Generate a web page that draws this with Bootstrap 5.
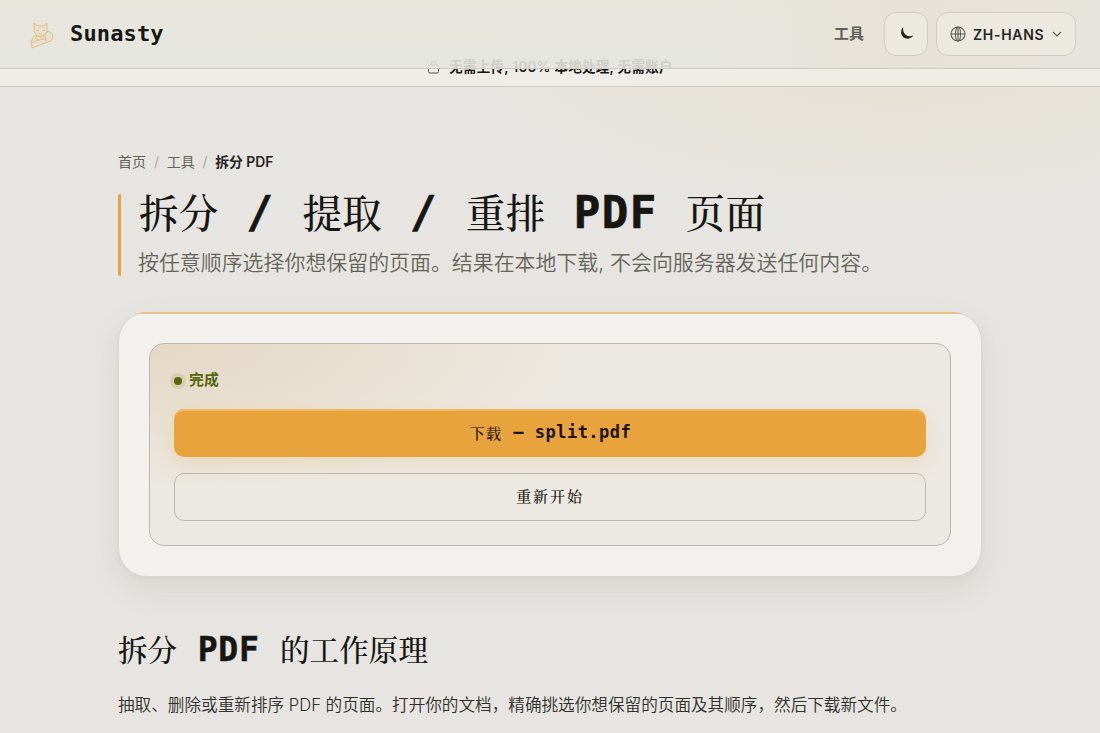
<!DOCTYPE html>
<html lang="zh-Hans">
<head>
<meta charset="utf-8">
<meta name="viewport" content="width=device-width, initial-scale=1">
<title>拆分 PDF – Sunasty</title>
<link href="https://cdn.jsdelivr.net/npm/bootstrap@5.3.0/dist/css/bootstrap.min.css" rel="stylesheet">
<style>
:root{--ink:#171711;--muted:#656459;--amber:#e8a33d}
html,body{height:100%;overflow:hidden}
body{font-family:Inter,"Noto Sans CJK SC",sans-serif;color:var(--ink);
 background:radial-gradient(ellipse 440px 150px at 900px 55px,#e7e1d2 0,#e7e1d200 100%),#e6e5e1}
.topbar{height:69px;padding:0 24px 0 26px;border-bottom:1px solid #cbcac5;background:linear-gradient(90deg,#e7e6df00 65%,#e7e2d8 82%,#e7e3dcaa),linear-gradient(#e7e6dd,#e6e6e1)}
.mono{font-family:"DejaVu Sans Mono","Noto Serif CJK SC","Noto Sans CJK SC",monospace;font-weight:700}
.cjk{font-family:"Noto Serif CJK SC","Noto Serif SC","AR PL UMing CN","Noto Sans CJK SC",serif;font-weight:500;-webkit-text-stroke:0}
.logo-word{font-size:22px;letter-spacing:.15px;line-height:30px;margin-left:-2px}
.ctl{height:44px;border:1px solid #d0cdc4;border-radius:12px;background:#ece9e1;color:#25241f}
.strip{height:18px;border-bottom:1px solid #cbcac5;background:#eeede8;overflow:hidden;line-height:18px}
.strip-line{margin-top:-11px}
.notice{font-size:13.5px;font-weight:600;letter-spacing:.3px;white-space:nowrap}
.ghost{color:#cfcec8;line-height:18px;left:0;right:0;top:57px;height:12px;overflow:hidden}
.page{width:864px;padding-top:64px}
.crumbs{font-size:14.1px;line-height:21px;color:var(--muted)}
.crumbs i{font-style:normal;color:#aaa9a1;margin:0 7.7px}
.here{color:#25241f;font-size:13.8px;letter-spacing:-.02px}
.hero{display:flow-root;border-left:3px solid var(--amber);border-radius:2px;margin-top:21px;height:82px;padding-left:17px}
h1{font-size:44px;line-height:40px;letter-spacing:1.5px;white-space:pre;margin:-3px 0 0 1px;-webkit-text-stroke:.7px var(--ink)}
h1 .cjk{font-size:39.6px;letter-spacing:.2px}
.intro{font-size:20.93px;line-height:30px;color:var(--muted);font-weight:350;margin-top:15px;white-space:nowrap}
.tool{margin-top:36px;height:265px;border:1px solid #d8d7d1;border-radius:29px;background:#f2f1ed;padding:30px;box-shadow:0 12px 30px #68684c1e,0 2px 5px #68684c0a;position:relative}
.tool::before{content:"";position:absolute;inset:-1px;border-radius:29px;background:linear-gradient(#e6c287,#e6c287) top/100% 2px no-repeat;pointer-events:none}
.result{height:203px;border:1px solid #b9b7b0;border-radius:15px;padding:24px;background:radial-gradient(ellipse 430px 145px at 0 0,#e5d8c6 0,#e8dfcf 45%,#ece9e200 100%),#ece9e2}
.done{color:#58680f;font-size:14.9px;line-height:24px;font-weight:700}
.dot{width:8px;height:8px;background:#58680f;box-shadow:0 0 0 4px #d9cdb0;margin:1px 7px 0 0}
.act{height:48px;border-radius:10px;display:flex;align-items:center;justify-content:center;white-space:pre}
.go{background:var(--amber);margin-top:17px;font-size:17px;letter-spacing:.5px;padding-left:1px;color:#1b1408;box-shadow:0 8px 18px #e8a33d30,inset 0 2px 0 #efb964}
.go .cjk{font-size:15px;letter-spacing:1.4px}
.again{border:1px solid #b9b7b0;margin-top:16px;font-size:15px;letter-spacing:1.9px;padding-bottom:2px}
h2{font-size:33px;line-height:42px;margin-top:50px;letter-spacing:.7px;white-space:pre;-webkit-text-stroke:.5px var(--ink)}
h2 .cjk{font-size:29.6px;letter-spacing:0}
.copy{font-size:16.62px;line-height:28px;margin-top:20px;font-weight:350;color:#30302b;white-space:nowrap}
</style>
</head>
<body>
<header class="topbar d-flex align-items-center position-relative">
 <svg width="30" height="32" viewBox="0 0 30 32" fill="#e8d9bd55" stroke="#e8bd7c" stroke-width="1" stroke-linejoin="round">
  <path d="M8 13V5l4 3h5l4-3v9l-3 5h-7z"/><path d="M8 18l-3 6 1 6 13-5 6-2 2-4-1-4-4-2-4 4-3 1z"/><path fill="none" d="M10 12l3 1m6-1-3 1m-3 2 1.500 1 1.500-1M6 25l6-3 8-1M9 20l4 3m6-5 1 5"/>
 </svg>
 <span class="mono logo-word flex-grow-1 ps-3">Sunasty</span>
 <a class="text-decoration-none fw-bold me-3" style="font-size:15px;color:#605f55;padding-right:4px">工具</a>
 <button class="ctl p-0 me-2 d-flex align-items-center justify-content-center" style="width:44px" aria-label="主题"><svg width="16" height="16" viewBox="0 0 16 16" style="margin:-3px 0 0 2px"><path d="M4.400 2.100C3 7.400 6.800 13 14.300 10.600 10.300 16.400 2 13.400 2.100 7.100c.1-2.200 1-3.900 2.300-5Z" fill="#25241f"/></svg></button>
 <button class="ctl d-flex align-items-center p-0" style="width:140px;padding-left:13px!important"><svg width="16" height="16" viewBox="0 0 16 16" fill="none" stroke="#5a5950" stroke-width="1.100"><circle cx="8" cy="8" r="7"/><ellipse cx="8" cy="8" rx="2.500" ry="7"/><path d="M1 8h14M8 1v14"/></svg><span class="fw-semibold" style="font-size:14px;letter-spacing:.7px;margin-left:7px">ZH-HANS</span><svg width="10" height="8" viewBox="0 0 10 8" fill="none" stroke="#5a5950" stroke-width="1.100" style="margin-left:8px"><path d="m1 2 4 4 4-4"/></svg></button>
 <div class="ghost notice position-absolute text-center" aria-hidden="true"><svg style="margin-right:9px" width="13" height="14" viewBox="0 0 13 14" fill="none" stroke="currentColor"><rect x="1.500" y="5" width="10" height="7" rx="1.500"/><path d="M4 5V3.500a2.500 2.500 0 0 1 5 0V5"/></svg>无需上传, 100% 本地处理, 无需账户</div>
</header>
<div class="strip text-center"><div class="strip-line notice"><svg style="margin-right:9px" width="13" height="14" viewBox="0 0 13 14" fill="none" stroke="#55544d"><rect x="1.500" y="5" width="10" height="7" rx="1.500"/><path d="M4 5V3.500a2.500 2.500 0 0 1 5 0V5"/></svg>无需上传, 100% 本地处理, 无需账户</div></div>
<main class="page mx-auto">
 <nav class="crumbs">首页<i>/</i>工具<i>/</i><span class="fw-semibold here">拆分 PDF</span></nav>
 <section class="hero">
  <h1 class="mono"><span class="cjk">拆分</span> / <span class="cjk">提取</span> / <span class="cjk">重排</span> PDF <span class="cjk">页面</span></h1>
  <p class="intro mb-0">按任意顺序选择你想保留的页面。结果在本地下载, 不会向服务器发送任何内容。</p>
 </section>
 <section class="tool">
  <div class="result">
   <div class="done d-flex align-items-center"><span class="dot rounded-circle"></span>完成</div>
   <div class="act go mono"><span class="cjk">下载</span> – split.pdf</div>
   <div class="act again cjk">重新开始</div>
  </div>
 </section>
 <h2 class="mono mb-0"><span class="cjk">拆分</span> PDF <span class="cjk">的工作原理</span></h2>
 <p class="copy mb-0">抽取、删除或重新排序 PDF 的页面。打开你的文档，精确挑选你想保留的页面及其顺序，然后下载新文件。</p>
</main>
<script src="https://cdn.jsdelivr.net/npm/bootstrap@5.3.0/dist/js/bootstrap.bundle.min.js"></script>
</body>
</html>
